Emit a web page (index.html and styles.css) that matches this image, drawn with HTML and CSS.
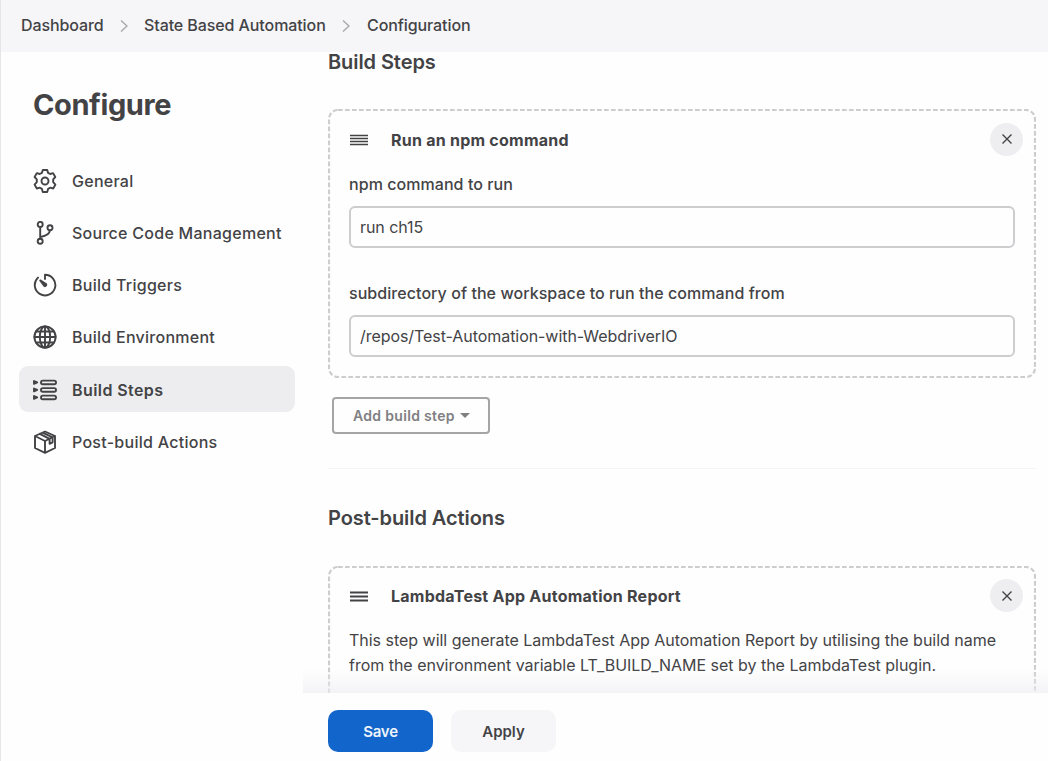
FILE: index.html
```html
<!DOCTYPE html>
<html lang="en">
<head>
<meta charset="utf-8">
<title>Configuration</title>
<link rel="stylesheet" href="styles.css">
</head>
<body>
<div class="page">
  <nav class="breadcrumbs">
    <span class="crumb crumb-dashboard">Dashboard</span>
    <svg class="chevron" viewBox="0 0 8 14"><path d="M1 1.5 7 7 1 12.5"/></svg>
    <span class="crumb crumb-project">State Based Automation</span>
    <svg class="chevron" viewBox="0 0 8 14"><path d="M1 1.5 7 7 1 12.5"/></svg>
    <span class="crumb crumb-current">Configuration</span>
  </nav>
  <div class="body">
    <aside class="sidebar">
      <h1 class="title">Configure</h1>
      <div class="nav">
        <div class="nav-item">
          <svg class="icon" viewBox="0 0 24 24"><path d="M9.800 1h4.400l.9 2.900 2 1.100 3-.9 2.200 3.900-2.100 2.300v2.900l2.200 2.400-2.200 3.900-3.100-.8-2 1.200-.9 3.100H9.800l-.9-3.100-2-1.200-3.100.8-2.200-3.900 2.200-2.400v-2.900L1.600 8l2.200-3.900 3 .9 2.100-1.100z"/><circle cx="12" cy="12" r="3.500"/></svg>
          <span class="nav-label">General</span>
        </div>
        <div class="nav-item">
          <svg class="icon" viewBox="0 0 24 24"><circle cx="7.200" cy="3.400" r="2.500"/><circle cx="7.200" cy="20.300" r="2.500"/><circle cx="17" cy="6.700" r="2.500"/><path d="M7.200 6v11.600M16.900 9.400c-.3 4.300-3.800 5.600-9.500 6.600"/></svg>
          <span class="nav-label">Source Code Management</span>
        </div>
        <div class="nav-item">
          <svg class="icon" viewBox="0 0 24 24"><path d="M12 6V1.800A10.300 10.300 0 1 1 5 4.600"/><path class="solid" d="m7.200 7.400 5.900 3.600a1.400 1.400 0 0 1-1.800 2z"/></svg>
          <span class="nav-label">Build Triggers</span>
        </div>
        <div class="nav-item">
          <svg class="icon" viewBox="0 0 24 24"><circle cx="12" cy="12" r="10.600"/><ellipse cx="12" cy="12" rx="5.200" ry="10.600"/><path d="M12 1.400v21.200M1.400 12h21.200M3.200 6.500h17.600M3.200 17.500h17.600"/></svg>
          <span class="nav-label">Build Environment</span>
        </div>
        <div class="nav-item active">
          <svg class="icon" viewBox="0 0 24 24"><rect x="8" y="2.600" width="15" height="3.600" rx="1.800"/><rect x="8" y="10.100" width="15" height="3.600" rx="1.800"/><rect x="8" y="17.600" width="15" height="3.600" rx="1.800"/><path class="solid" d="M1 3 4.200 4.400 1 5.800zM1 10.500l3.200 1.400L1 13.300zM1 18l3.200 1.400L1 20.800z"/></svg>
          <span class="nav-label">Build Steps</span>
        </div>
        <div class="nav-item">
          <svg class="icon" viewBox="0 0 24 24"><path d="M12 1.500 22 6v12l-10 4.800L2 18V6zM2 6l10 5 10-5M12 11v11.800M6.800 3.800l9.800 5v5l3-1.500V7.300L9.600 2.700"/></svg>
          <span class="nav-label">Post-build Actions</span>
        </div>
      </div>
    </aside>
    <main class="content">
      <h2 class="section-title">Build Steps</h2>
      <section class="card card-npm">
        <svg class="outline"><rect class="dashes" x="1" y="1" width="706" height="267" rx="9"/></svg>
        <header class="card-head">
          <svg class="grip" viewBox="0 0 18 12"><path d="M0 1.500h18M0 4.500h18M0 7.500h18M0 10.500h18"/></svg>
          <h3 class="card-title title-npm">Run an npm command</h3>
          <span class="close"><svg viewBox="0 0 10 10"><path d="m.5.5 9 9m0-9-9 9"/></svg></span>
        </header>
        <label class="label label-command">npm command to run</label>
        <div class="field"><span class="value-command">run ch15</span></div>
        <label class="label label-directory">subdirectory of the workspace to run the command from</label>
        <div class="field"><span class="value-directory">/repos/Test-Automation-with-WebdriverIO</span></div>
      </section>
      <div class="add-step"><span>Add build step</span><i class="caret"></i></div>
      <hr class="divider">
      <h2 class="section-title section-post">Post-build Actions</h2>
      <section class="card card-report">
        <svg class="outline"><rect class="dashes" x="1" y="1" width="706" height="267" rx="9"/></svg>
        <header class="card-head">
          <svg class="grip" viewBox="0 0 18 12"><path d="M0 1.500h18M0 5.500h18M0 9.500h18"/></svg>
          <h3 class="card-title title-report">LambdaTest App Automation Report</h3>
          <span class="close"><svg viewBox="0 0 10 10"><path d="m.5.5 9 9m0-9-9 9"/></svg></span>
        </header>
        <p class="description"><span class="line-one">This step will generate LambdaTest App Automation Report by utilising the build name</span><br><span class="line-two">from the environment variable LT_BUILD_NAME set by the LambdaTest plugin.</span></p>
      </section>
      <div class="fade"></div>
    </main>
  </div>
  <footer class="actions">
    <div class="button save">Save</div>
    <div class="button apply">Apply</div>
  </footer>
</div>
</body>
</html>
```
FILE: styles.css
```css
* { box-sizing: border-box; }
body { margin: 0; font-family: Inter, sans-serif; font-size: 16px; color: #434346; background: #fefefe; }
h1, h2, h3, p { margin: 0; }
svg { display: block; fill: none; stroke: currentColor; }
.page { width: 1048px; height: 761px; display: grid; grid-template-rows: 52px 641px 68px; overflow: hidden; border-left: 1px solid #e6e6e9; }
.breadcrumbs { display: flex; align-items: center; padding-left: 20px; background: #f6f6f8; font-weight: 500; line-height: 51px; letter-spacing: -.09px; white-space: nowrap; }
.crumb { height: 52px; }
.crumb-dashboard { width: 99px; }
.crumb-project { width: 198px; margin-left: 16px; }
.crumb-current { margin-left: 17px; }
.chevron { width: 8px; height: 14px; stroke: #a9a9ad; stroke-width: 1.5; flex: none; }
.body { display: grid; grid-template-columns: 302px 1fr; min-height: 0; }
.sidebar { padding: 33px 7px 0 18px; }
.title { padding-left: 14px; font-size: 29px; line-height: 40px; font-weight: 700; letter-spacing: -.4px; }
.nav { display: flex; flex-direction: column; gap: 6px; margin-top: 33px; }
.nav-item { display: flex; align-items: center; gap: 15px; width: 276px; height: 46px; padding-left: 14px; border-radius: 9px; font-weight: 550; letter-spacing: .27px; white-space: nowrap; }
.nav-item:nth-child(n+5) { padding-top: 1px; }
.active { background: #ededef; }
.active .nav-label { font-weight: 600; letter-spacing: .42px; }
.icon { width: 24px; height: 24px; stroke-width: 1.9; stroke-linejoin: round; stroke-linecap: round; flex: none; }
.solid { fill: currentColor; }
.content { position: relative; padding: 0 12px 0 25px; min-height: 0; }
.section-title { font-size: 20px; font-weight: 600; line-height: 20px; letter-spacing: -.08px; white-space: nowrap; }
.card { position: relative; width: 708px; height: 269px; padding: 13px 13px 0 21px; }
.card-npm { margin-top: 37px; }
.card-report { margin-top: 38px; }
.outline { position: absolute; inset: 0; width: 708px; height: 269px; }
.dashes { stroke: #cdcdd0; stroke-width: 2.2; stroke-dasharray: 4.700 2.300; }
.card-head { display: flex; align-items: center; height: 34px; }
.card-report .card-head { height: 33px; }
.grip { width: 18px; height: 12px; stroke-width: 1.5; margin: 1px 0 0 1px; flex: none; }
.card-report .grip { stroke-width: 1.9; margin-top: 2px; }
.card-title { flex: 1; padding: 1px 0 0 23px; font-size: 16px; font-weight: 700; letter-spacing: .24px; white-space: nowrap; }
.close { display: grid; place-items: center; width: 33px; height: 33px; border-radius: 50%; background: #eeeef0; }
.close svg { width: 10px; height: 10px; stroke-width: 1.4; }
.label { display: block; height: 22px; margin: 17px 0 11px; font-weight: 500; line-height: 22px; letter-spacing: .06px; white-space: nowrap; }
.field { width: 666px; height: 42px; padding-left: 9px; border: 2px solid #cdcdd0; border-radius: 6px; line-height: 38px; letter-spacing: -.06px; }
.field + .label { margin-top: 34px; }
.add-step { display: flex; align-items: center; width: 158px; height: 37px; margin: 19px 0 0 4px; padding-left: 19px; border: 2px solid #a5a5a8; border-radius: 4px; color: #808083; font-size: 14px; font-weight: 600; letter-spacing: .32px; white-space: nowrap; }
.caret { margin-left: 5px; border: 5px solid transparent; border-top: 5px solid #808083; border-bottom: 0; }
.divider { height: 1px; margin: 34px 0 0; border: 0; background: #f4f4f6; }
.section-post { margin-top: 39px; }
.description { margin-top: 16px; line-height: 25px; letter-spacing: -.02px; white-space: nowrap; }
.fade { position: absolute; left: 0; right: 0; bottom: 0; height: 24px; background: linear-gradient(rgba(238, 238, 242, 0), rgba(238, 238, 242, .65)); }
.actions { position: relative; z-index: 1; display: flex; align-items: flex-start; gap: 18px; padding: 17px 0 0 327px; background: #fefefe; }
.button { width: 105px; height: 42px; border-radius: 10px; font-size: 15px; font-weight: 600; line-height: 43px; text-align: center; }
.save { background: #1265ca; color: #edf3fa; letter-spacing: -.2px; }
.apply { background: #f6f6f8; }
```
